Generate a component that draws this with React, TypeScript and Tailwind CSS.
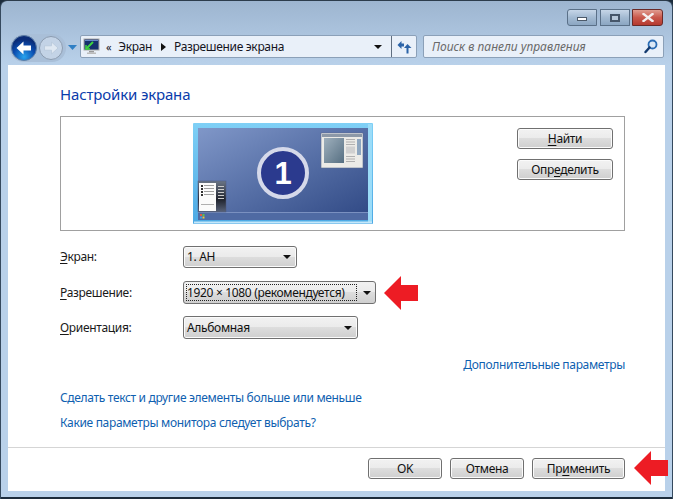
const ui = "font-['Noto_Sans','Open_Sans',sans-serif] tracking-[-0.33px]";

function RedArrow() {
  return (
    <svg width="34" height="34" viewBox="0 0 34 34" className="shrink-0">
      <path d="M0 17 L17 0 V9 H34 V25 H17 V34 Z" fill="#ed1c24" />
    </svg>
  );
}

function Caret({ className = "" }: { className?: string }) {
  return (
    <svg width="8" height="4" viewBox="0 0 8 4" className={`shrink-0 ${className}`}>
      <path d="M0 0 H8 L4 4 Z" fill="#111" />
    </svg>
  );
}

function Key({ children }: { children: string }) {
  return <span className="underline underline-offset-2">{children}</span>;
}

function Button({ className = "", children }: { className?: string; children: React.ReactNode }) {
  return (
    <button className={`flex shrink-0 items-center justify-center rounded-[3px] border border-[#707070] bg-[linear-gradient(#f2f2f2_0%,#ebebeb_48%,#dddddd_50%,#cfcfcf_100%)] text-[12px] text-[#111] shadow-[inset_0_0_0_1px_#fbfbfb] ${className}`}>
      {children}
    </button>
  );
}

function Select({ className = "", children }: { className?: string; children: React.ReactNode }) {
  return (
    <div className={`flex items-center justify-between rounded-[3px] border border-[#707070] bg-[linear-gradient(#f2f2f2_0%,#ebebeb_48%,#dddddd_50%,#cfcfcf_100%)] pl-[3px] pr-[5px] text-[12px] text-[#111] shadow-[inset_0_0_0_1px_#fbfbfb] ${className}`}>
      <span>{children}</span>
      <Caret />
    </div>
  );
}

function Row({ label, className = "", children }: { label: React.ReactNode; className?: string; children: React.ReactNode }) {
  return (
    <div className={`flex items-center ${className}`}>
      <div className="w-[123px] text-[12px] text-[#1a1a1a]">{label}</div>
      {children}
    </div>
  );
}

function NavButtons() {
  return (
    <div className="relative mt-[-1px] flex h-[28px] w-[56px] items-center gap-[2px] rounded-full bg-[#a9bfd8] pl-[1px]">
      <svg width="26" height="26" viewBox="0 0 26 26">
        <defs>
          <radialGradient id="back" cx="50%" cy="85%" r="70%">
            <stop offset="0" stopColor="#28a4ee" />
            <stop offset="0.6" stopColor="#0a4db0" />
            <stop offset="1" stopColor="#0a2c78" />
          </radialGradient>
        </defs>
        <circle cx="13" cy="13" r="12.5" fill="url(#back)" stroke="#5d7ea6" />
        <path d="M5.5 13 L12.5 6.5 V10.5 H20 V15.5 H12.5 V19.5 Z" fill="#fff" />
      </svg>
      <svg width="24" height="24" viewBox="0 0 24 24">
        <circle cx="12" cy="12" r="11.5" fill="#c3d3e6" stroke="#8c9cb0" />
        <path d="M19 12 L12.5 6 V9.8 H5.5 V14.2 H12.5 V18 Z" fill="#dfe8f2" stroke="#b5c5d8" strokeWidth="0.7" />
      </svg>
    </div>
  );
}

function Monitor() {
  return (
    <svg width="180" height="101" viewBox="0 0 180 101">
      <defs>
        <linearGradient id="scr" x1="0" y1="0" x2="1" y2="1">
          <stop offset="0" stopColor="#8097c8" />
          <stop offset="0.5" stopColor="#566fa6" />
          <stop offset="1" stopColor="#2f4884" />
        </linearGradient>
        <linearGradient id="frame" x1="0" y1="0" x2="0" y2="1">
          <stop offset="0" stopColor="#7fd0f6" />
          <stop offset="1" stopColor="#4ca9e4" />
        </linearGradient>
        <linearGradient id="thumb" x1="0" y1="0" x2="1" y2="1">
          <stop offset="0" stopColor="#9fb0bd" />
          <stop offset="1" stopColor="#566f82" />
        </linearGradient>
        <linearGradient id="side" x1="0" y1="0" x2="0" y2="1">
          <stop offset="0" stopColor="#6b7687" />
          <stop offset="0.6" stopColor="#20242e" />
          <stop offset="1" stopColor="#59637a" />
        </linearGradient>
      </defs>
      <rect x="0" y="0" width="180" height="101" rx="1" fill="url(#frame)" />
      <rect x="175" y="1" width="4" height="99" fill="#9bdcf8" />
      <rect x="1" y="98.5" width="178" height="2" fill="#c5e8fa" />
      <rect x="5" y="5" width="170" height="92" fill="url(#scr)" />
      <rect x="5" y="89" width="170" height="8" fill="#4f6aa3" />
      <rect x="5" y="89" width="170" height="1" fill="#7a90c0" />
      <rect x="7" y="91" width="2" height="2" fill="#e85a3c" />
      <rect x="9.5" y="91" width="2" height="2" fill="#5fc04a" />
      <rect x="7" y="93.5" width="2" height="2" fill="#3f9be6" />
      <rect x="9.5" y="93.5" width="2" height="2" fill="#f0c83c" />
      <circle cx="90" cy="50" r="24" fill="#2b3a8e" stroke="#d5d9ea" strokeWidth="4" />
      <text x="90" y="61" textAnchor="middle" fontFamily="'Liberation Sans',sans-serif" fontWeight="700" fontSize="31" letterSpacing="0" fill="#fff">1</text>
      <rect x="128" y="10" width="42" height="35" fill="#ecebe7" stroke="#59688c" strokeWidth="0.6" />
      <rect x="129" y="11" width="40" height="3" fill="#8d99a8" />
      <rect x="131" y="15" width="20" height="25" fill="url(#thumb)" />
      <rect x="153" y="16" width="9" height="1" fill="#b0b0b0" />
      <rect x="153" y="18.5" width="9" height="1" fill="#b0b0b0" />
      <rect x="153" y="21" width="9" height="1" fill="#b0b0b0" />
      <rect x="153" y="23.5" width="9" height="7" fill="#d0d0d0" />
      <rect x="153" y="33" width="9" height="1" fill="#b0b0b0" />
      <rect x="153" y="35.5" width="9" height="1" fill="#b0b0b0" />
      <rect x="153" y="38" width="9" height="1" fill="#b0b0b0" />
      <rect x="164" y="16" width="4" height="16" fill="#8ea6bf" />
      <rect x="5" y="58" width="28" height="31" fill="url(#side)" stroke="#4c5a80" strokeWidth="0.5" />
      <rect x="6" y="60" width="17" height="28" fill="#fbfbfb" />
      <rect x="8" y="62" width="2" height="2" fill="#333" />
      <rect x="11" y="62" width="10" height="1" fill="#a0a0a0" />
      <rect x="8" y="65" width="2" height="2" fill="#333" />
      <rect x="11" y="65" width="10" height="1" fill="#a0a0a0" />
      <rect x="8" y="68" width="2" height="2" fill="#333" />
      <rect x="11" y="68" width="10" height="1" fill="#a0a0a0" />
      <rect x="8" y="71" width="2" height="2" fill="#333" />
      <rect x="11" y="71" width="10" height="1" fill="#a0a0a0" />
      <rect x="8" y="81" width="13" height="1" fill="#b0b0b0" />
      <rect x="25" y="63" width="6" height="1" fill="#ccc" />
      <rect x="25" y="66" width="6" height="1" fill="#ccc" />
      <rect x="25" y="69" width="6" height="1" fill="#ccc" />
      <rect x="25" y="72" width="6" height="1" fill="#ccc" />
      <rect x="25" y="75" width="6" height="1" fill="#ccc" />
    </svg>
  );
}

export default function App() {
  return (
    <div className={`${ui} flex h-[499px] w-[673px] flex-col overflow-hidden bg-[#1c2c3c]`}>
      <div className="flex h-full flex-col rounded-t-[7px] border-x border-t border-x-[#35495e] border-t-[#2c3c4c] bg-[linear-gradient(#9db5d0_0px,#b9d1ea_64px)]">
        <div className="flex h-[34px] shrink-0 items-start justify-end pr-[9px] pt-[8px]">
          <div className="flex h-[17px] w-[30px] items-center justify-center rounded-l-[3px] border border-[#5a7088] bg-[linear-gradient(#c6d6e8,#a3bad2_50%,#8ba6c2)]">
            <div className="mt-[3px] h-[4px] w-[10px] border border-[#4c5a6a] bg-white" />
          </div>
          <div className="ml-[3px] flex h-[17px] w-[30px] items-center justify-center border border-[#5a7088] bg-[linear-gradient(#c6d6e8,#a3bad2_50%,#8ba6c2)]">
            <div className="h-[8px] w-[10px] border-2 border-[#46566a] bg-[#b8c8da]" />
          </div>
          <div className="ml-[2px] flex h-[17px] w-[31px] items-center justify-center rounded-r-[3px] border border-[#6a2a28] bg-[linear-gradient(#e09c90,#c9584c_50%,#b53a30)]">
            <svg width="12" height="9" viewBox="0 0 12 9">
              <path d="M1.5 1 L10.5 8 M10.5 1 L1.5 8" stroke="#f4eeee" strokeWidth="2.4" strokeLinecap="square" />
            </svg>
          </div>
        </div>

        <div className="flex h-[30px] shrink-0 items-start pl-[9px] pr-[8px]">
          <NavButtons />
          <svg width="9" height="5" viewBox="0 0 9 5" className="ml-[2px] mt-[10px] shrink-0">
            <path d="M0 0 H9 L4.5 5 Z" fill="#2f7fc4" />
          </svg>
          <div className="ml-[3px] flex h-[23px] w-[337px] items-center rounded-[2px] border border-[#8ba0b8] bg-[#e9f0f9] text-[12px] text-[#14141e]">
            <svg width="17" height="17" viewBox="0 0 17 17" className="ml-[2px] shrink-0">
              <rect x="1" y="1" width="15" height="11" fill="#16306e" stroke="#a8a8a8" />
              <rect x="2" y="2" width="13" height="1" fill="#6688c8" />
              <path d="M3 11 L10 4" stroke="#3fd43f" strokeWidth="2" />
              <path d="M3 7 V11 H7" stroke="#3fd43f" strokeWidth="1.5" fill="none" />
              <rect x="6" y="13" width="5" height="1.5" fill="#999" />
              <rect x="4" y="14.5" width="9" height="1.5" fill="#bbb" />
            </svg>
            <span className="ml-[6px] text-[11px] leading-none">«</span>
            <span className="ml-[7px]">Экран</span>
            <svg width="5" height="8" viewBox="0 0 5 8" className="ml-[9px] shrink-0">
              <path d="M0 0 L5 4 L0 8 Z" fill="#111" />
            </svg>
            <span className="ml-[8px]">Разрешение экрана</span>
            <Caret className="ml-auto mr-[9px]" />
            <div className="flex h-full w-[25px] items-center justify-center border-l border-[#5f6e80]">
              <svg width="15" height="14" viewBox="0 0 15 14">
                <path d="M0.5 5 L4.5 1 V3.5 H7 V6.5 H4.5 V9 Z" fill="#2b63a8" />
                <path d="M14.5 8 L10.5 4 L7 8 H9.5 V13.5 H11.5 V8 Z" fill="#2b63a8" />
              </svg>
            </div>
          </div>
          <div className="ml-[6px] flex h-[23px] flex-1 items-center justify-between rounded-[2px] border border-[#8ba0b8] bg-[#e9f0f9] pl-[8px] pr-[5px]">
            <span className="text-[12px] italic tracking-normal text-[#6a6a6a]">Поиск в панели управления</span>
            <svg width="14" height="15" viewBox="0 0 14 15">
              <circle cx="8.5" cy="5.5" r="4" fill="#dbe8f6" stroke="#2a6cb4" strokeWidth="1.8" />
              <path d="M5.5 8.5 L1.5 13" stroke="#12396e" strokeWidth="2.4" strokeLinecap="round" />
            </svg>
          </div>
        </div>

        <div className="mx-[7px] flex min-h-0 flex-1 flex-col bg-white">
          <div className="flex-1 pl-[52px] pr-[40px] pt-[18px]">
            <h1 className="h-[22px] text-[15px] leading-[22px] tracking-[-0.15px] text-[#0a3cab]">Настройки экрана</h1>
            <div className="mt-[11px] flex h-[115px] w-[565px] border border-[#a0a0a0] pt-[6px]">
              <div className="ml-[132px]">
                <Monitor />
              </div>
              <div className="ml-[144px] flex flex-col gap-[10px] pt-[5px]">
                <Button className="h-[21px] w-[96px]"><span><Key>Н</Key>айти</span></Button>
                <Button className="h-[21px] w-[96px]"><span>Опр<Key>е</Key>делить</span></Button>
              </div>
            </div>
            <Row label={<><Key>Э</Key>кран:</>} className="mt-[15px]">
              <Select className="h-[22px] w-[114px]">1. AH</Select>
            </Row>
            <Row label={<><Key>Р</Key>азрешение:</>} className="mt-[13px] h-[23px]">
              <div className="flex h-[23px] w-[193px] items-center rounded-[3px] border border-[#707070] bg-[linear-gradient(#f2f2f2_0%,#ebebeb_48%,#dddddd_50%,#cfcfcf_100%)] p-[2px] text-[12px] text-[#111]">
                <span className="flex h-[17px] w-[171px] items-center border border-dotted border-[#222] whitespace-nowrap">1920 × 1080 (рекомендуется)</span>
                <Caret className="ml-[6px]" />
              </div>
              <div className="ml-[8px]">
                <RedArrow />
              </div>
            </Row>
            <Row label={<><Key>О</Key>риентация:</>} className="mt-[12px]">
              <Select className="h-[23px] w-[175px]">Альбомная</Select>
            </Row>
            <div className="mt-[17px] w-[565px] text-right text-[12px] leading-[18px] text-[#0f5fb0]">Дополнительные параметры</div>
            <div className="mt-[15px] text-[12px] leading-[18px] text-[#0f5fb0]">Сделать текст и другие элементы больше или меньше</div>
            <div className="mt-[7px] text-[12px] leading-[18px] text-[#0f5fb0]">Какие параметры монитора следует выбрать?</div>
          </div>
          <div className="flex h-[44px] shrink-0 items-start border-t border-[#d5d5d5] pt-[10px] pl-[360px]">
            <Button className="h-[21px] w-[74px]">OK</Button>
            <Button className="ml-[8px] h-[21px] w-[74px]">Отмена</Button>
            <Button className="ml-[8px] h-[21px] w-[93px]"><span>Пр<Key>и</Key>менить</span></Button>
            <div className="ml-[9px] mt-[-7px] shrink-0">
              <RedArrow />
            </div>
          </div>
        </div>
        <div className="h-[6px] shrink-0" />
        <div className="h-[2px] shrink-0 bg-[#1c2c3c]" />
      </div>
    </div>
  );
}
